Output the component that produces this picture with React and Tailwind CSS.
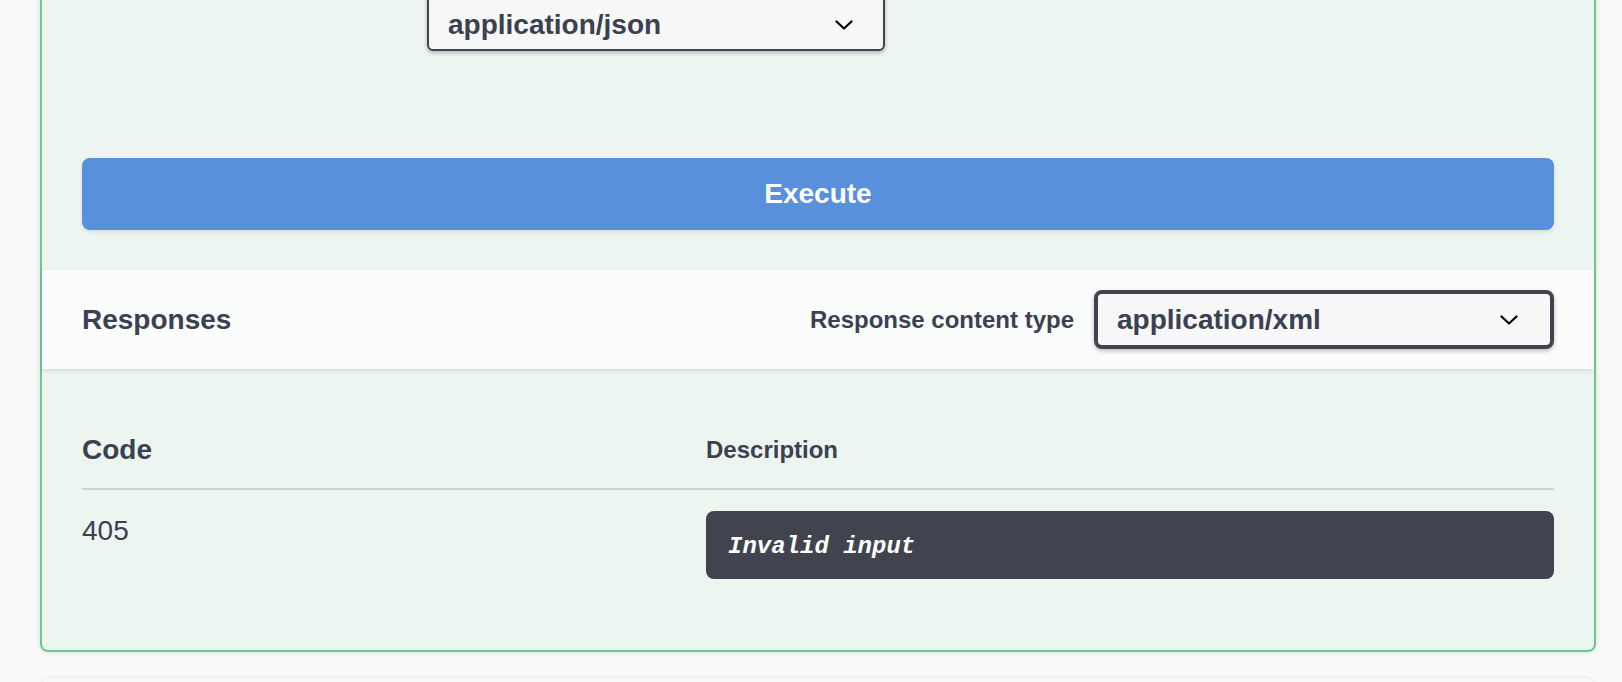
import React from 'react';

const sans = { fontFamily: '"Liberation Sans", Arial, Helvetica, sans-serif' };
const mono = { fontFamily: '"Liberation Mono", "Courier New", monospace' };

// Thin down-chevron drawn at the right of a select
function Chevron() {
  return (
    <svg width="18" height="10" viewBox="0 0 18 10" className="shrink-0">
      <path d="M1.5 1.5L9 8.5l7.5-7" fill="none" stroke="#000" strokeWidth="2.2" strokeLinecap="round" strokeLinejoin="round" />
    </svg>
  );
}

function Select({ value, className }) {
  return (
    <div
      className={`flex items-center bg-[#f7f7f7] border-[#41444e] pl-[19px] shadow-[0_2px_4px_0_rgba(0,0,0,0.25)] ${className}`}
    >
      <span className="flex-1 text-[28px] font-bold text-[#3b4151] leading-[32px]">{value}</span>
      <Chevron />
    </div>
  );
}

export default function App() {
  return (
    <div className="h-[682px] overflow-hidden bg-[#fafafa]" style={sans}>
      {/* POST operation block, body expanded */}
      <div className="ml-[40px] w-[1556px] -mt-[20px] rounded-lg border-2 border-[#6cc891] bg-[#ecf5f0] shadow-[0_0_6px_rgba(0,0,0,0.12)]">
        <div className="pt-[13px] px-[40px]">
          <Select value="application/json" className="ml-[345px] w-[458px] h-[56px] border-2 rounded-[6px] pr-[30px] pt-[4px]" />
        </div>

        <div className="px-[40px] mt-[107px]">
          <button className="w-full h-[72px] rounded-lg bg-[#5890dc] text-white text-[28px] font-bold shadow-[0_2px_4px_rgba(0,0,0,0.1)]">
            Execute
          </button>
        </div>

        {/* Responses section header */}
        <div className="mt-[40px] h-[99px] flex items-center justify-between px-[40px] bg-[#fbfcfc] shadow-[0_2px_4px_rgba(0,0,0,0.1)]">
          <h4 className="text-[28px] font-bold text-[#3b4151]">Responses</h4>
          <div className="flex items-center gap-[20px]">
            <span className="text-[24px] font-bold text-[#3b4151]">Response content type</span>
            <Select value="application/xml" className="w-[460px] h-[59px] border-4 rounded-lg pr-[32px]" />
          </div>
        </div>

        {/* Responses table */}
        <div className="px-[40px] pt-[41px] pb-[71px]">
          <div className="flex items-center h-[80px] pt-[2px] border-b-2 border-[#cdd3d2] text-[#3b4151] font-bold">
            <div className="w-[624px] text-[28px]">Code</div>
            <div className="flex-1 text-[24px]">Description</div>
          </div>
          <div className="flex pt-[21px]">
            <div className="w-[624px] pt-[4px] text-[28px] leading-[32px] text-[#3b4151]">405</div>
            <div className="flex-1">
              <div className="h-[68px] flex items-center px-[22px] pt-[3px] rounded-lg bg-[#41444e]">
                <span className="text-[24px] font-bold italic text-white" style={mono}>Invalid input</span>
              </div>
            </div>
          </div>
        </div>
      </div>

      {/* next operation block, just peeking in */}
      <div className="ml-[42px] w-[1552px] mt-[26px] h-[60px] rounded-lg bg-[#fafafa] shadow-[0_0_4px_rgba(0,0,0,0.1)]" />
    </div>
  );
}
